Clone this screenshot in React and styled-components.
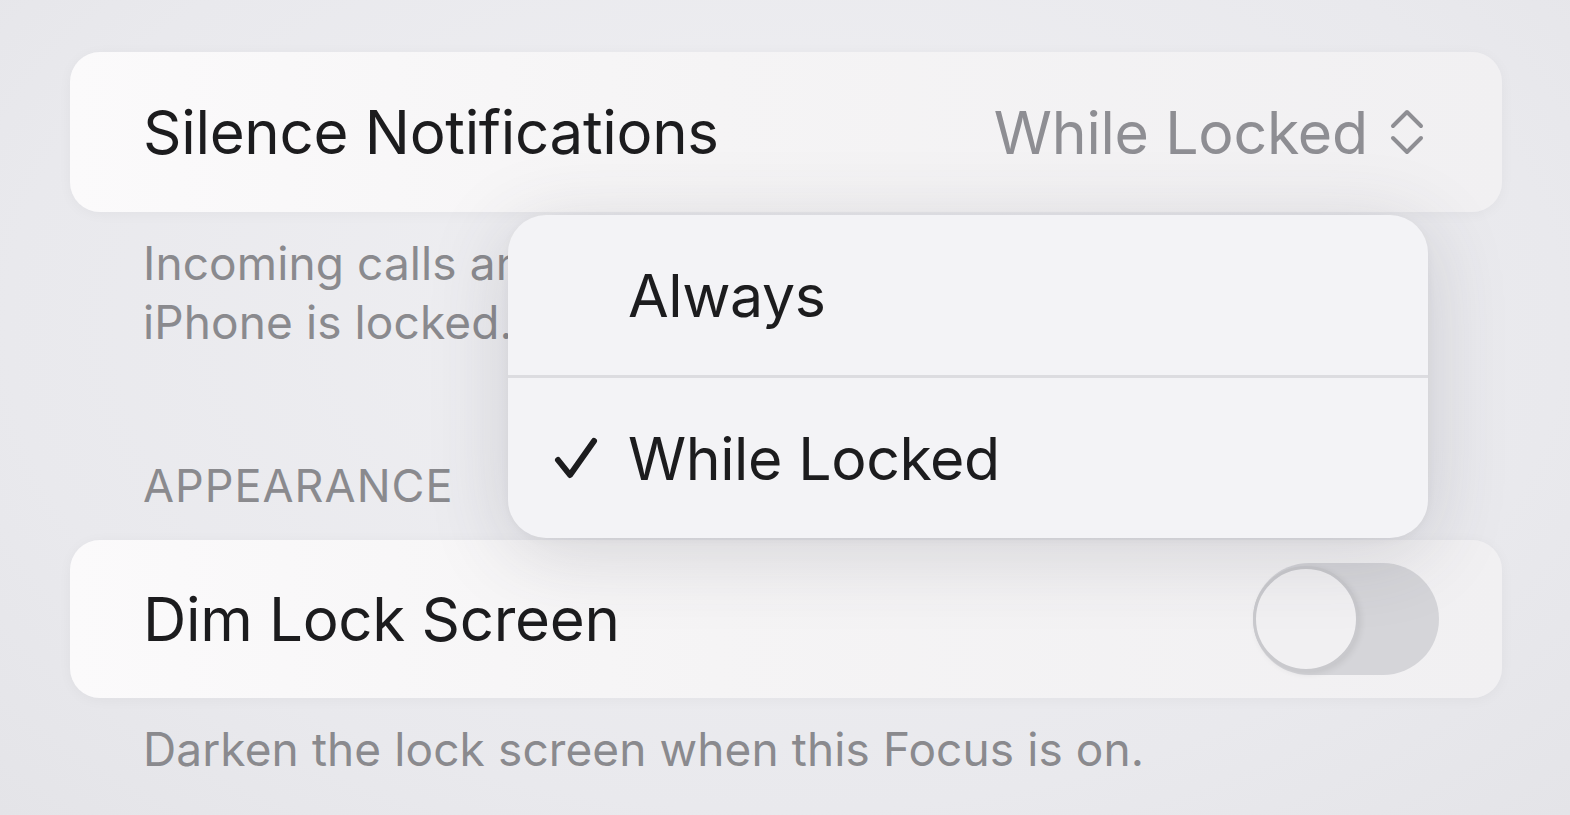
import React from 'react';
import styled, { createGlobalStyle } from 'styled-components';

const GlobalStyle = createGlobalStyle`
    html, body {
        margin: 0;
        padding: 0;
        background: #ebebef;
        font-family: Inter, "Noto Sans", sans-serif;
        -webkit-font-smoothing: antialiased;
    }
`;

const Page = styled.div`
    position: relative;
    width: 1570px;
    height: 815px;
    overflow: hidden;
    box-sizing: border-box;
    padding: 52px 68px 0 70px;
    background: radial-gradient(ellipse at 50% 40%, #f0f0f3 0%, #e9e9ed 70%, #e4e4e8 100%);
`;

const Group = styled.div`
    height: ${p => p.$h}px;
    border-radius: 30px;
    background: linear-gradient(90deg, #fbfafb 0%, #f5f4f5 45%, #f1f0f2 100%);
    box-shadow: 0 2px 14px rgba(0, 0, 0, 0.04);
    display: flex;
    align-items: center;
    justify-content: space-between;
    padding: 0 65px 0 73px;
`;

const Label = styled.span`
    font-size: 60px;
    color: #1c1c1e;
    letter-spacing: -0.3px;
`;

const Value = styled.span`
    display: flex;
    align-items: center;
    gap: 22px;
    font-size: 59px;
    color: #8e8e93;
    letter-spacing: -0.2px;
    padding-right: 13px;
`;

const Footer = styled.p`
    margin: ${p => p.$mt}px 0 0;
    padding: 0 73px;
    font-size: 46px;
    line-height: 59px;
    color: #8a8a8e;
    letter-spacing: 0.1px;
`;

const SectionHeader = styled.h3`
    margin: 108px 0 28px;
    padding: 0 73px;
    font-size: 45px;
    line-height: 52px;
    font-weight: 400;
    color: #8a8a8e;
    letter-spacing: 1px;
`;

const Menu = styled.div`
    position: absolute;
    left: 508px;
    top: 215px;
    width: 920px;
    border-radius: 38px;
    background: #f3f3f6;
    box-shadow: 0 14px 80px rgba(60, 60, 80, 0.18), 0 2px 10px rgba(0, 0, 0, 0.04);
    overflow: hidden;
    z-index: 2;
`;

const MenuItem = styled.div`
    height: ${p => p.$h}px;
    display: grid;
    grid-template-columns: 120px 1fr;
    align-items: center;
    font-size: 59px;
    color: #1c1c1e;
    letter-spacing: -0.4px;
    & + & {
        border-top: 3px solid #dcdce0;
    }
`;

const Check = styled.span`
    display: flex;
    justify-content: flex-end;
    padding-right: 30px;
`;

const Toggle = styled.div`
    width: 186px;
    height: 112px;
    border-radius: 56px;
    background: #d5d5d9;
    display: flex;
    align-items: center;
    margin-right: -2px;
`;

const Knob = styled.div`
    width: 100px;
    height: 100px;
    border-radius: 50%;
    background: #f1f0f2;
    border: 3px solid #c9c9cd;
    box-shadow: 2px 2px 6px rgba(0, 0, 0, 0.08);
`;

const UpDown = () => (
    <svg width="34" height="46" viewBox="0 0 34 46" fill="none" stroke="#8e8e93" strokeWidth="4" strokeLinecap="round" strokeLinejoin="round">
        <path d="M3 17 L17 3 L31 17" />
        <path d="M3 29 L17 43 L31 29" />
    </svg>
);

const CheckMark = () => (
    <svg width="44" height="42" viewBox="0 0 44 42" fill="none" stroke="#1c1c1e" strokeWidth="6" strokeLinecap="round" strokeLinejoin="round">
        <path d="M4 23 L16 38 L40 4" />
    </svg>
);

const App = () => {
    return (
        <>
            <GlobalStyle />
            <Page>
                <Group $h={160}>
                    <Label>Silence Notifications</Label>
                    <Value>While Locked <UpDown /></Value>
                </Group>
                <Footer $mt={22}>
                    Incoming calls and notifications will be silenced while<br />
                    iPhone is locked.
                </Footer>

                <SectionHeader>APPEARANCE</SectionHeader>
                <Group $h={158}>
                    <Label>Dim Lock Screen</Label>
                    <Toggle><Knob /></Toggle>
                </Group>
                <Footer $mt={22}>Darken the lock screen when this Focus is on.</Footer>

                <Menu>
                    <MenuItem $h={160}>
                        <span />
                        <span>Always</span>
                    </MenuItem>
                    <MenuItem $h={160}>
                        <Check><CheckMark /></Check>
                        <span>While Locked</span>
                    </MenuItem>
                </Menu>
            </Page>
        </>
    );
};

export default App;
